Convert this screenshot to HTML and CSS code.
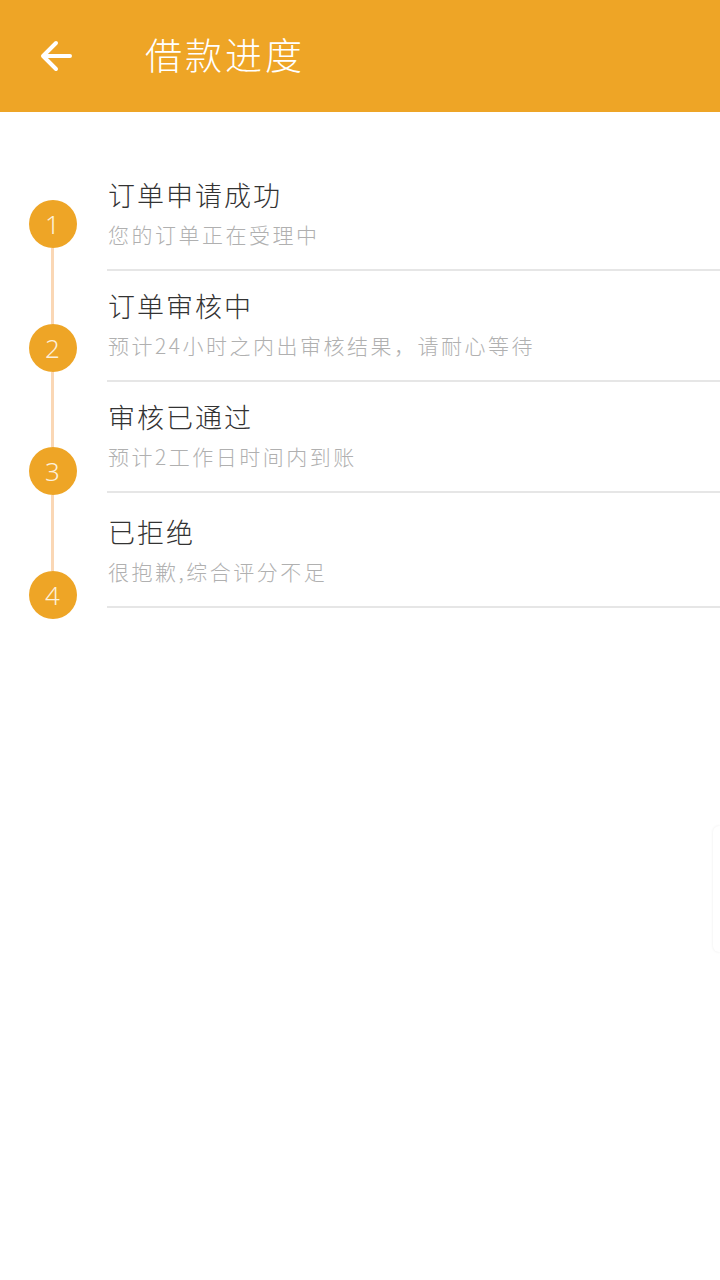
FILE: index.html
```html
<!DOCTYPE html>
<html lang="zh-CN">
<head>
  <meta charset="UTF-8">
  <meta name="viewport" content="width=device-width, initial-scale=1.0">
  <title>借款进度</title>
  <link rel="stylesheet" href="styles.css">
</head>
<body>
  <div class="header">
    <span class="back">
      <svg width="34" height="34" viewBox="0 0 34 34"><path d="M31 17H5M17 4L4 17l13 13" fill="none" stroke="#fff" stroke-width="4" stroke-linecap="round" stroke-linejoin="round"/></svg>
    </span>
    <h1>借款进度</h1>
  </div>

  <div class="progress">
    <div class="timeline">
      <div class="dot">1</div>
      <div class="line"></div>
      <div class="dot">2</div>
      <div class="line"></div>
      <div class="dot">3</div>
      <div class="line"></div>
      <div class="dot">4</div>
    </div>
    <div class="steps">
      <div class="step">
        <div class="step-title">订单申请成功</div>
        <div class="step-desc">您的订单正在受理中</div>
      </div>
      <div class="step">
        <div class="step-title">订单审核中</div>
        <div class="step-desc">预计24小时之内出审核结果，请耐心等待</div>
      </div>
      <div class="step">
        <div class="step-title">审核已通过</div>
        <div class="step-desc">预计2工作日时间内到账</div>
      </div>
      <div class="step">
        <div class="step-title">已拒绝</div>
        <div class="step-desc">很抱歉,综合评分不足</div>
      </div>
    </div>
  </div>

  <div class="side-tab"></div>
</body>
</html>
```

FILE: styles.css
```css
body { margin: 0; background: #fff; font-family: "Noto Sans CJK SC", "Noto Sans", sans-serif; }
.header { height: 112px; background: #eea526; display: flex; align-items: center; }
.back { width: 34px; height: 34px; margin-left: 39px; display: flex; }
.header h1 { margin: 0 0 4px 72px; color: #fff; font-size: 37px; font-weight: 300; letter-spacing: 3px; }

.progress { display: flex; margin-top: 48px; }
.timeline { width: 107px; flex: none; display: flex; flex-direction: column; align-items: center; padding-top: 40px; margin-left: -1px; }
.dot { width: 48px; height: 48px; border-radius: 50%; background: #eea526; color: #fdf0da; font-family: "Noto Sans", sans-serif; font-weight: 300; font-size: 26px; display: flex; align-items: center; justify-content: center; }
.line { width: 3px; height: 75.5px; background: #fad7b5; }

.steps { flex: 1; margin-left: 1px; }
.step { padding: 17px 0 20px 1px; border-bottom: 2px solid #e6e6e6; }
.step:last-child { padding-top: 21px; }
.step-title { font-size: 27px; line-height: 36px; color: #333; font-weight: 300; letter-spacing: 2px; }
.step-desc { margin-top: 6px; font-size: 21px; line-height: 30px; color: #b0b0b0; font-weight: 300; letter-spacing: 2.5px; }

.side-tab { position: absolute; right: 0; top: 826px; width: 7px; height: 126px; border-radius: 6px 0 0 6px; background: #fff; box-shadow: 0 0 3px rgba(0,0,0,0.08); }
```
